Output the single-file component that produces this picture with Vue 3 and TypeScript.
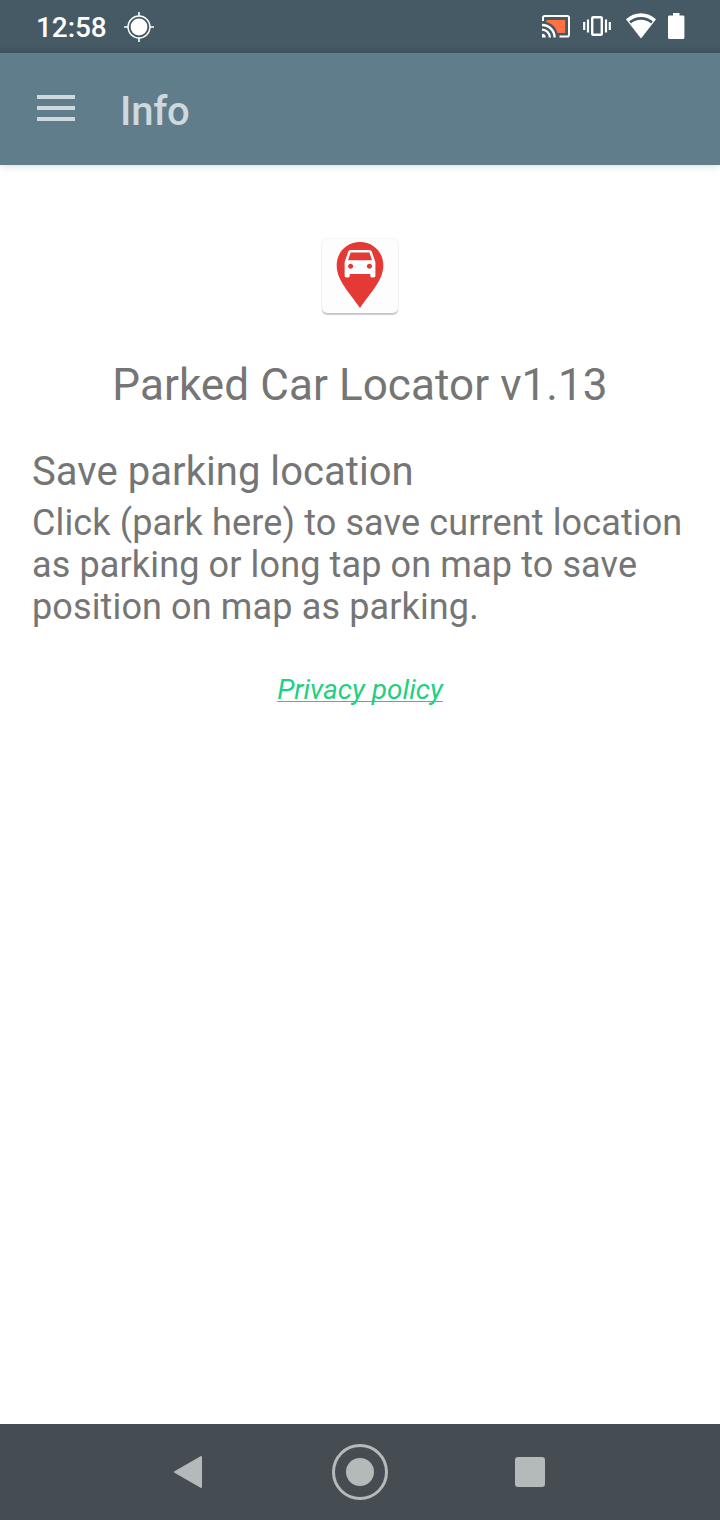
<script setup lang="ts">
const title: string = 'Info'
const appName: string = 'Parked Car Locator v1.13'
const heading: string = 'Save parking location'
const lines: string[] = [
  'Click (park here) to save current location',
  'as parking or long tap on map to save',
  'position on map as parking.',
]
</script>

<template>
  <div class="screen">
    <header class="status">
      <span class="clock">12:58</span>
      <svg class="gps" width="30" height="30" viewBox="0 0 30 30">
        <circle cx="15" cy="15" r="8.4" fill="#fff" />
        <circle cx="15" cy="15" r="11" fill="none" stroke="#fff" stroke-width="1.4" />
        <path d="M15 0v4M15 26v4M0 15h4M26 15h4" stroke="#fff" stroke-width="1.6" />
      </svg>
      <svg class="cast" width="28" height="23" viewBox="0 0 28 23">
        <path d="M4.500 5H23.200V18H15.500C14 12.500 10.500 8.500 4.500 7.200z" fill="#ff7043" />
        <path d="M1 6V2.500Q1 1 2.800 1H25.200Q27 1 27 2.800V19.700Q27 21.500 25.200 21.500H17.500" fill="none" stroke="#fff" stroke-width="2" />
        <path d="M0 10A12.500 12.500 0 0 1 12.600 22.500M0 14.700A7.800 7.800 0 0 1 7.900 22.500" fill="none" stroke="#fff" stroke-width="2.300" />
        <path d="M0 18.800A3.800 3.800 0 0 1 3.800 22.500H0z" fill="#fff" />
      </svg>
      <svg class="vibrate" width="28" height="20" viewBox="0 0 28 20">
        <rect x="9.200" y="1.200" width="9.600" height="17.600" rx="1" fill="none" stroke="#fff" stroke-width="2.400" />
        <path d="M1.200 6v8M5 3.500v13M23 3.500v13M26.800 6v8" stroke="#fff" stroke-width="2.200" />
      </svg>
      <svg class="wifi" width="30" height="26" viewBox="0 0 30 26">
        <path d="M0 6.200C8.500-1.900 21.500-1.900 30 6.200L15 25.500z" fill="#fff" />
        <path d="M3.200 8.200C10 2.500 20 2.500 26.800 8.200L25.100 10.400C19.500 5.600 10.500 5.600 4.900 10.400z" fill="#455a64" />
      </svg>
      <svg class="battery" width="17" height="26" viewBox="0 0 17 26">
        <path d="M5 0h6.500v2.600H15Q16.400 2.600 16.400 4V24.500Q16.400 26 15 26H1.400Q0 26 0 24.500V4Q0 2.600 1.400 2.600H5z" fill="#fff" />
      </svg>
    </header>

    <nav class="toolbar">
      <svg class="menu" width="38" height="26" viewBox="0 0 38 26">
        <path d="M0 2h38M0 13h38M0 24h38" stroke="#cfd8dc" stroke-width="4" />
      </svg>
      <h1>{{ title }}</h1>
    </nav>

    <main class="content">
      <div class="app-icon">
        <svg width="76" height="75" viewBox="322 239 76 75">
          <path d="M360 242C346.500 242 336.700 252.400 336.700 265.300C336.700 281 350 293 360 308C370 293 383.300 281 383.300 265.300C383.300 252.400 373.500 242 360 242z" fill="#e53935" />
          <g transform="translate(339.500 241.500) scale(1.710)">
            <path d="M18.920 6.010C18.720 5.420 18.160 5 17.500 5h-11c-.66 0-1.210.42-1.420 1.010L3 12v8c0 .55.45 1 1 1h1c.55 0 1-.45 1-1v-1h12v1c0 .55.45 1 1 1h1c.55 0 1-.45 1-1v-8l-2.080-5.990zM6.500 16c-.83 0-1.500-.67-1.500-1.500S5.670 13 6.500 13s1.500.67 1.500 1.500S7.330 16 6.500 16zm11 0c-.83 0-1.500-.67-1.500-1.500s.67-1.500 1.500-1.500 1.500.67 1.500 1.500-.67 1.500-1.500 1.500zM5 11l1.500-4.500h11L19 11H5z" fill="#fff" />
          </g>
        </svg>
      </div>
      <h2><span>{{ appName }}</span></h2>
      <h3><span>{{ heading }}</span></h3>
      <p class="body">
        <span v-for="line in lines" :key="line" class="line">{{ line }}</span>
      </p>
      <a class="privacy">Privacy policy</a>
    </main>

    <footer class="navbar">
      <svg width="30" height="34" viewBox="0 0 30 34">
        <path d="M2 17L28 2V32z" fill="#b4b9ba" stroke="#b4b9ba" stroke-width="2" stroke-linejoin="round" />
      </svg>
      <svg class="home" width="56" height="56" viewBox="0 0 56 56">
        <circle cx="28" cy="28" r="26.500" fill="none" stroke="#b4b9ba" stroke-width="3" />
        <circle cx="28" cy="28" r="14" fill="#b4b9ba" />
      </svg>
      <svg width="30" height="30" viewBox="0 0 30 30">
        <rect width="30" height="30" rx="3" fill="#b4b9ba" />
      </svg>
    </footer>
  </div>
</template>

<style>
body {
  margin: 0;
}
</style>

<style scoped>
.screen {
  width: 720px;
  height: 1520px;
  display: flex;
  flex-direction: column;
  background: #fff;
  font-family: Roboto, "Liberation Sans", sans-serif;
  color: #757575;
}
svg {
  display: block;
  flex: none;
}
h1, h2, h3, p {
  margin: 0;
  font-weight: 400;
  white-space: nowrap;
}
.status {
  height: 53px;
  box-sizing: border-box;
  display: flex;
  align-items: flex-start;
  padding: 0 35px 0 36px;
  background: linear-gradient(#455a64 46px, #3f545e);
}
.clock {
  width: 88px;
  margin-top: 11px;
  font-size: 28px;
  line-height: 33px;
  font-weight: 500;
  letter-spacing: -0.100px;
  color: #fff;
}
.gps {
  margin-top: 12px;
}
.cast {
  margin: 15px 0 0 auto;
}
.vibrate {
  margin: 16px 0 0 13px;
}
.wifi {
  margin: 13px 0 0 15px;
}
.battery {
  margin: 13px 0 0 12px;
}
.toolbar {
  height: 112px;
  display: flex;
  align-items: center;
  padding-left: 37px;
  background: #607d8b;
  box-shadow: 0 1px 7px rgba(40, 60, 75, 0.200);
}
.menu {
  margin-bottom: 2px;
}
.toolbar h1 {
  margin: 6px 0 0 45px;
  font-size: 40px;
  line-height: 48px;
  font-weight: 500;
  letter-spacing: -0.200px;
  color: #cfd8dc;
}
.content {
  flex: 1;
  display: flex;
  flex-direction: column;
  padding: 74px 32px 0;
}
.app-icon {
  align-self: center;
  width: 76px;
  height: 74px;
  border-radius: 5px;
  background: #fdfdfd;
  box-shadow: 0 2px 1px rgba(0, 0, 0, 0.200), 0 0 2px rgba(0, 0, 0, 0.120);
}
h2 {
  align-self: center;
  margin-top: 46px;
  font-size: 44px;
  line-height: 52px;
  letter-spacing: 0.080px;
}
h3 {
  margin-top: 37px;
  font-size: 40px;
  line-height: 47px;
  letter-spacing: 0.050px;
}
.body {
  margin-top: 7px;
  font-size: 36px;
  line-height: 42px;
  letter-spacing: 0.130px;
}
.line {
  display: block;
  width: max-content;
}
.privacy {
  align-self: center;
  margin-top: 45px;
  font-size: 28px;
  line-height: 33px;
  font-style: italic;
  color: #1fd082;
  text-decoration: underline;
  text-decoration-thickness: 1px;
  text-underline-offset: 2px;
  text-decoration-skip-ink: none;
}
.navbar {
  height: 96px;
  display: flex;
  align-items: center;
  justify-content: space-between;
  box-sizing: border-box;
  padding: 0 175px 0 173px;
  background: #454d52;
}
.home {
  margin-left: 2px;
}
</style>
